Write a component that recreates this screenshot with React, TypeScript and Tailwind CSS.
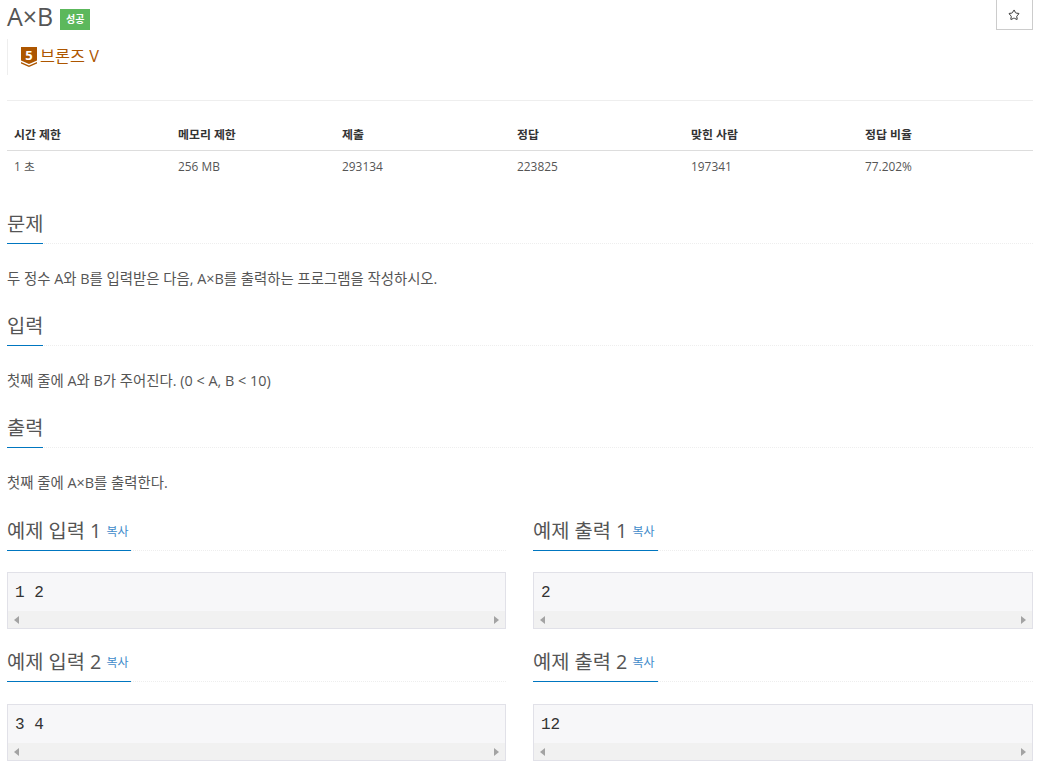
import { Star } from "lucide-react";

const FONT = "font-['Open_Sans','Noto_Sans_CJK_KR',sans-serif]";

const HEAD = ["시간 제한", "메모리 제한", "제출", "정답", "맞힌 사람", "정답 비율"];
const ROW = ["1 초", "256 MB", "293134", "223825", "197341", "77.202%"];

function Headline({ children, width = "w-[36px]" }: { children: React.ReactNode; width?: string }) {
  return (
    <div className="border-b border-dotted border-[#eeeeee]">
      <h2 className={`inline-block h-[32px] -mb-px border-b border-[#0076c0] pr-px text-[19.800px] leading-[24px] text-[#555] font-normal whitespace-nowrap ${width}`}>
        {children}
      </h2>
    </div>
  );
}

function SampleBox({ text }: { text: string }) {
  return (
    <div className="border border-[#e1e1e8] bg-[#f7f7f9] h-[57px] flex flex-col">
      <pre className="flex-1 px-[7px] pt-[10px] font-['Liberation_Mono',monospace] text-[16px] leading-[20px] text-[#333]">{text}</pre>
      <div className="h-[17px] bg-[#f1f1f1] flex items-center justify-between px-[6px]">
        <svg width="5" height="8" viewBox="0 0 5 8"><path d="M5 0v8L0 4z" fill="#a3a3a3" /></svg>
        <svg width="5" height="8" viewBox="0 0 5 8"><path d="M0 0v8l5-4z" fill="#a3a3a3" /></svg>
      </div>
    </div>
  );
}

function Sample({ title, text, width, gap }: { title: string; text: string; width: string; gap: string }) {
  return (
    <div>
      <Headline width={width}>
        {title} <span className="text-[12px] align-[2px] text-[#428bca]">복사</span>
      </Headline>
      <div className={gap}>
        <SampleBox text={text} />
      </div>
    </div>
  );
}

function Section({ title, children }: { title: string; children: React.ReactNode }) {
  return (
    <section className="mt-[25px] first:mt-0">
      <Headline>{title}</Headline>
      <p className="mt-[25px] text-[14.400px] leading-[20px] text-[#555]">{children}</p>
    </section>
  );
}

export default function App() {
  return (
    <div className={`${FONT} bg-white h-[769px] overflow-hidden pl-[7px] pr-[6px]`}>
      {/* Title */}
      <div className="flex items-start justify-between h-[39px]">
        <div className="flex items-start pt-[1px]">
          <h1 className="text-[25px] leading-[30px] text-[#555] font-normal">A×B</h1>
          <span className="ml-[7px] mt-[8px] w-[30px] h-[21px] bg-[#5cb85c] text-white text-[10px] font-semibold flex items-center justify-center">성공</span>
        </div>
        <button className="-mt-px w-[37px] h-[31px] border border-[#cccccc] flex items-center justify-center">
          <Star size={12} strokeWidth={2} className="text-[#333] -ml-px" />
        </button>
      </div>

      {/* Tier */}
      <div className="h-[36px] border-l border-[#eeeeee] pl-[13px] flex items-start gap-[3px] pt-[7px]">
        <svg width="16" height="20" viewBox="0 0 16 20" className="mt-[1px]">
          <path d="M0 0h16v13.500L8 17 0 13.500z" fill="#ad5600" />
          <path d="M0 15l8 3.500L16 15v1.500L8 20 0 16.500z" fill="#ad5600" />
          <text x="8" y="12.500" textAnchor="middle" fontSize="13" fontWeight="700" fill="#fff">5</text>
        </svg>
        <span className="text-[16.300px] leading-[20px] text-[#ad5600]">브론즈 V</span>
      </div>

      <div className="mt-[25px] border-t border-[#eeeeee]" />

      {/* Stats table */}
      <div className="mt-[24px] grid grid-cols-[164px_164px_175px_174px_174px_1fr] text-[11.900px] text-[#333]">
        {HEAD.map((h) => (
          <div key={h} className="pl-[7px] h-[26px] border-b border-[#dddddd] font-bold leading-[18px]">{h}</div>
        ))}
        {ROW.map((c) => (
          <div key={c} className="pl-[7px] pt-[5px] h-[30px] leading-[20px] text-[#555]">{c}</div>
        ))}
      </div>

      <div className="mt-[31px]">
        <Section title="문제">두 정수 A와 B를 입력받은 다음, A×B를 출력하는 프로그램을 작성하시오.</Section>
        <Section title="입력">첫째 줄에 A와 B가 주어진다. (0 &lt; A, B &lt; 10)</Section>
        <Section title="출력">첫째 줄에 A×B를 출력한다.</Section>
      </div>

      {/* Samples */}
      <div className="mt-[26px] grid grid-cols-[499px_500px] gap-x-[27px] gap-y-[21px]">
        <Sample title="예제 입력 1" text="1 2" width="w-[124px]" gap="mt-[21px]" />
        <Sample title="예제 출력 1" text="2" width="w-[125px]" gap="mt-[21px]" />
        <Sample title="예제 입력 2" text="3 4" width="w-[124px]" gap="mt-[22px]" />
        <Sample title="예제 출력 2" text="12" width="w-[125px]" gap="mt-[22px]" />
      </div>
    </div>
  );
}
